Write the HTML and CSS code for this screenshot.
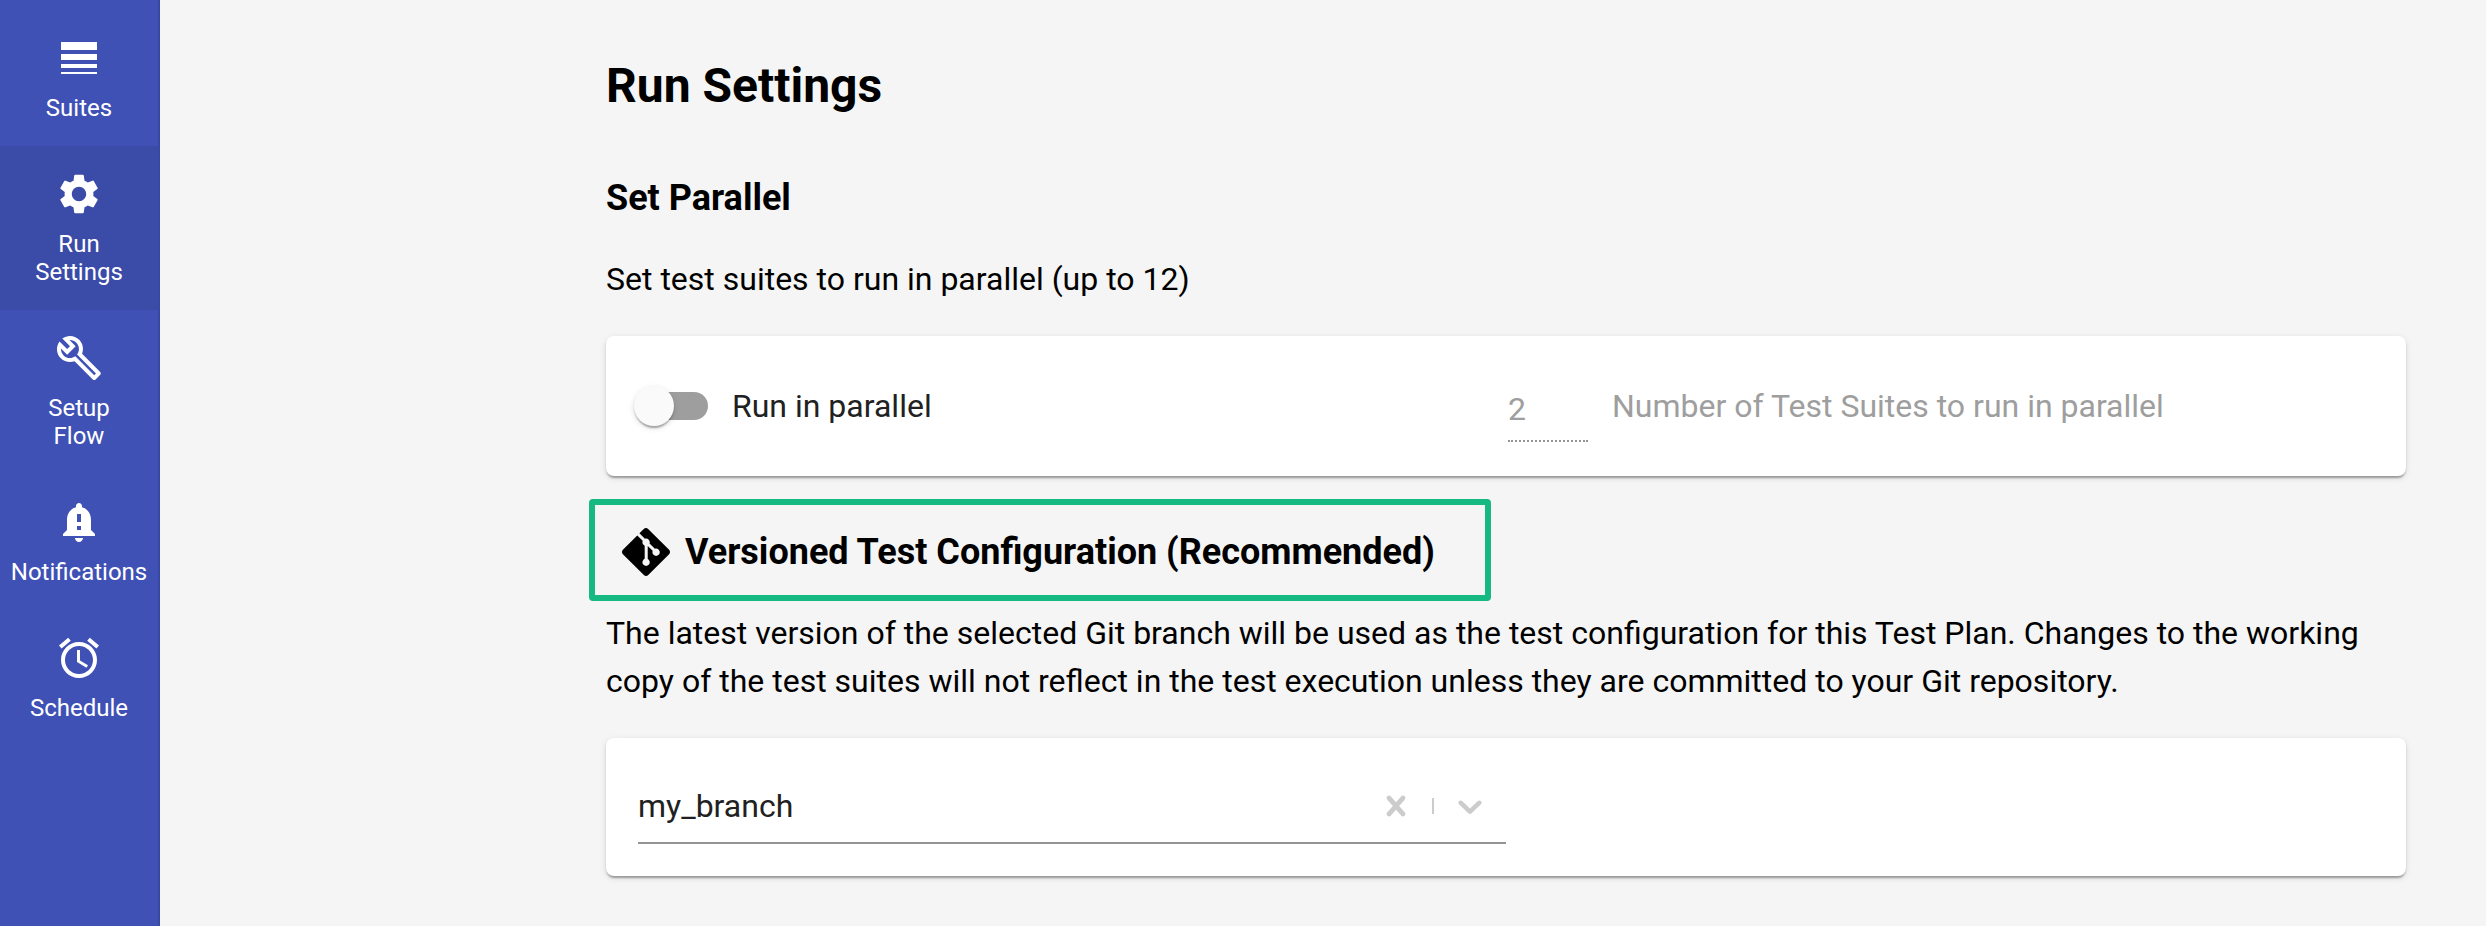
FILE: index.html
```html
<!DOCTYPE html>
<html lang="en">
<head>
<meta charset="utf-8">
<meta name="viewport" content="width=device-width, initial-scale=1">
<title>Run Settings</title>
<link rel="stylesheet" href="styles.css">
</head>
<body>
<div class="app">
  <nav class="sidebar" aria-label="Test plan">
    <a class="nav-item" href="#suites">
      <svg class="nav-icon" viewBox="0 0 24 24" aria-hidden="true"><path d="M3 17h18v-2H3v2zm0 3h18v-1H3v1zm0-7h18v-3H3v3zm0-9v4h18V4H3z"/></svg>
      <span class="nav-label">Suites</span>
    </a>
    <a class="nav-item nav-item-active" href="#run-settings" aria-current="page">
      <svg class="nav-icon" viewBox="0 0 24 24" aria-hidden="true"><path d="M19.14 12.94c.04-.3.06-.61.06-.94 0-.32-.02-.64-.07-.94l2.03-1.58c.18-.14.23-.41.12-.61l-1.92-3.32c-.12-.22-.37-.29-.59-.22l-2.39.96c-.5-.38-1.03-.7-1.62-.94l-.36-2.54c-.04-.24-.24-.41-.48-.41h-3.84c-.24 0-.43.17-.47.41l-.36 2.54c-.59.24-1.13.57-1.62.94l-2.39-.96c-.22-.08-.47 0-.59.22L2.74 8.87c-.12.21-.08.47.12.61l2.03 1.58c-.05.3-.09.63-.09.94s.02.64.07.94l-2.03 1.58c-.18.14-.23.41-.12.61l1.92 3.32c.12.22.37.29.59.22l2.39-.96c.5.38 1.03.7 1.62.94l.36 2.54c.05.24.24.41.48.41h3.84c.24 0 .44-.17.47-.41l.36-2.54c.59-.24 1.13-.56 1.62-.94l2.39.96c.22.08.47 0 .59-.22l1.92-3.32c.12-.22.07-.47-.12-.61l-2.01-1.58zM12 15.6c-1.98 0-3.6-1.62-3.6-3.6s1.62-3.6 3.6-3.6 3.6 1.62 3.6 3.6-1.62 3.6-3.6 3.6z"/></svg>
      <span class="nav-label">Run Settings</span>
    </a>
    <a class="nav-item" href="#setup-flow">
      <svg class="nav-icon" viewBox="0 0 24 24" aria-hidden="true"><path d="M22.61 18.99l-9.08-9.08c.93-2.34.45-5.1-1.44-7C9.79.61 6.21.4 3.66 2.26L7.5 6.11 6.08 7.52 2.25 3.69C.39 6.23.6 9.82 2.9 12.11c1.86 1.86 4.57 2.35 6.89 1.48l9.11 9.11c.39.39 1.02.39 1.41 0l2.3-2.3c.4-.38.4-1.01 0-1.41zm-3 1.6l-9.46-9.46c-.61.45-1.29.72-2 .82-1.36.2-2.79-.21-3.83-1.25C3.37 9.76 2.93 8.5 3 7.26l3.09 3.09 4.24-4.24-3.09-3.09c1.24-.07 2.49.37 3.44 1.31 1.08 1.08 1.49 2.57 1.24 3.96-.12.71-.42 1.37-.88 1.96l9.45 9.45-.88.89z"/></svg>
      <span class="nav-label">Setup Flow</span>
    </a>
    <a class="nav-item" href="#notifications">
      <svg class="nav-icon" viewBox="0 0 24 24" aria-hidden="true"><path d="M18 16v-5c0-3.07-1.64-5.64-4.5-6.32V4c0-.83-.67-1.5-1.5-1.5s-1.5.67-1.5 1.5v.68C7.63 5.36 6 7.92 6 11v5l-2 2v1h16v-1l-2-2zm-5 0h-2v-2h2v2zm0-4h-2V8h2v4zm-1 10c1.1 0 2-.9 2-2h-4c0 1.1.89 2 2 2z"/></svg>
      <span class="nav-label">Notifications</span>
    </a>
    <a class="nav-item" href="#schedule">
      <svg class="nav-icon" viewBox="0 0 24 24" aria-hidden="true"><path d="M22 5.72l-4.6-3.86-1.29 1.53 4.6 3.86L22 5.72zM7.88 3.39L6.6 1.86 2 5.71l1.29 1.53 4.59-3.85zM12.5 8H11v6l4.75 2.85.75-1.23-4-2.37V8zM12 4c-4.97 0-9 4.03-9 9s4.02 9 9 9c4.97 0 9-4.03 9-9s-4.03-9-9-9zm0 16c-3.87 0-7-3.13-7-7s3.13-7 7-7 7 3.13 7 7-3.13 7-7 7z"/></svg>
      <span class="nav-label">Schedule</span>
    </a>
  </nav>

  <main class="content">
    <h1 class="page-title">Run Settings</h1>

    <section>
      <h2 class="section-title">Set Parallel</h2>
      <p class="lead">Set test suites to run in parallel (up to 12)</p>
      <div class="card columns">
        <label class="field">
          <input class="switch" type="checkbox" role="switch">
          <span>Run in parallel</span>
        </label>
        <label class="field field-disabled">
          <input class="count" type="text" inputmode="numeric" value="2" disabled>
          <span>Number of Test Suites to run in parallel</span>
        </label>
      </div>
    </section>

    <section>
      <h2 class="section-title highlighted">
        <svg class="git-icon" viewBox="0 0 24 24" aria-hidden="true"><path d="M23.546 10.93L13.067.452c-.604-.603-1.582-.603-2.188 0L8.708 2.627l2.76 2.76c.645-.215 1.379-.07 1.889.441.516.515.658 1.258.438 1.9l2.658 2.66c.645-.223 1.387-.078 1.9.435.721.72.721 1.884 0 2.604-.719.719-1.881.719-2.6 0-.539-.541-.674-1.337-.404-1.996L12.86 8.955v6.525c.176.086.342.203.488.348.713.721.713 1.883 0 2.6-.719.721-1.889.721-2.609 0-.719-.719-.719-1.879 0-2.598.182-.18.387-.316.605-.406V8.835c-.217-.091-.424-.222-.6-.401-.545-.545-.676-1.342-.396-2.009L7.636 3.7.45 10.881c-.6.605-.6 1.584 0 2.189l10.48 10.477c.604.604 1.582.604 2.186 0l10.43-10.43c.605-.603.605-1.582 0-2.187"/></svg>
        <span>Versioned Test Configuration (Recommended)</span>
      </h2>
      <p class="lead">The latest version of the selected Git branch will be used as the test configuration for this Test Plan. Changes to the working copy of the test suites will not reflect in the test execution unless they are committed to your Git repository.</p>
      <div class="card">
        <div class="branch">
          <select class="branch-select" aria-label="Git branch">
            <option>my_branch</option>
          </select>
          <button class="branch-clear" type="button" aria-label="Clear branch">
            <svg class="branch-icon" viewBox="0 0 20 20" aria-hidden="true"><path d="M14.348 14.849c-0.469 0.469-1.229 0.469-1.697 0l-2.651-3.030-2.651 3.029c-0.469 0.469-1.229 0.469-1.697 0-0.469-0.469-0.469-1.229 0-1.697l2.758-3.15-2.759-3.152c-0.469-0.469-0.469-1.228 0-1.697s1.228-0.469 1.697 0l2.652 3.031 2.651-3.031c0.469-0.469 1.228-0.469 1.697 0s0.469 1.229 0 1.697l-2.758 3.152 2.758 3.15c0.469 0.469 0.469 1.229 0 1.698z"/></svg>
          </button>
          <span class="branch-separator"></span>
          <span class="branch-arrow">
            <svg class="branch-icon" viewBox="0 0 20 20" aria-hidden="true"><path d="M4.516 7.548c0.436-0.446 1.043-0.481 1.576 0l3.908 3.747 3.908-3.747c0.533-0.481 1.141-0.446 1.574 0 0.436 0.445 0.408 1.197 0 1.615-0.406 0.418-4.695 4.502-4.695 4.502-0.217 0.223-0.502 0.335-0.787 0.335s-0.57-0.112-0.789-0.335c0 0-4.287-4.084-4.695-4.502s-0.436-1.17 0-1.615z"/></svg>
          </span>
        </div>
      </div>
    </section>
  </main>
</div>
</body>
</html>
```

FILE: styles.css
```css
* {
  box-sizing: border-box;
}

body {
  margin: 0;
  background: #f5f5f5;
  color: #000;
  font-family: Roboto, "Liberation Sans", sans-serif;
  font-size: 32px;
  line-height: 48px;
}

.app {
  display: flex;
  min-height: 100vh;
}

.sidebar {
  flex: 0 0 160px;
  padding-top: 10px;
  border-right: 2px solid #3949a3;
  background: #3f51b5;
}

.nav-item {
  display: flex;
  flex-direction: column;
  align-items: center;
  gap: 12px;
  padding: 24px 10px;
  color: #fff;
  font-size: 24px;
  line-height: 28px;
  text-align: center;
  text-decoration: none;
}

.nav-item-active {
  background: #3a4ba8;
}

.nav-label {
  width: min-content;
}

.nav-icon {
  width: 48px;
  height: 48px;
  fill: currentColor;
}

.content {
  flex: 1;
  min-width: 0;
  padding: 58px 80px 48px 446px;
}

.page-title {
  margin: 0 0 60px;
  font-size: 48px;
  line-height: 56px;
  font-weight: 700;
}

.section-title {
  margin: 0 0 33px;
  font-size: 36px;
  line-height: 48px;
  font-weight: 700;
}

.highlighted {
  display: flex;
  align-items: center;
  gap: 15px;
  width: fit-content;
  margin: 23px 0 8px -17px;
  padding: 23px 50px 19px 27px;
  border: 6px solid #16b981;
  border-radius: 4px;
}

.git-icon {
  flex: none;
  width: 48px;
  height: 48px;
}

.lead {
  margin: 0 0 33px;
}

.card {
  padding: 32px;
  border-radius: 8px;
  background: #fff;
  color: #212121;
  box-shadow: 0 4px 2px -2px rgba(0, 0, 0, 0.2), 0 2px 2px rgba(0, 0, 0, 0.14), 0 2px 6px rgba(0, 0, 0, 0.12);
}

.columns {
  display: grid;
  grid-template-columns: 1fr 1fr;
  gap: 4px;
}

.field {
  display: flex;
  align-items: center;
  gap: 24px;
  min-height: 76px;
}

.field-disabled {
  color: #9e9e9e;
}

.switch {
  position: relative;
  width: 68px;
  height: 28px;
  margin: 0 0 0 2px;
  appearance: none;
  border-radius: 14px;
  background: #9e9e9e;
}

.switch::before {
  content: "";
  position: absolute;
  top: -6px;
  left: -6px;
  width: 40px;
  height: 40px;
  border-radius: 50%;
  background: #fafafa;
  box-shadow: 0 4px 2px -2px rgba(0, 0, 0, 0.2), 0 2px 2px rgba(0, 0, 0, 0.14), 0 2px 6px rgba(0, 0, 0, 0.12);
}

.switch:checked {
  background: #9fa8da;
}

.switch:checked::before {
  left: 34px;
  background: #3f51b5;
}

.count {
  width: 80px;
  height: 72px;
  padding: 8px 0 0;
  border: 0;
  border-bottom: 2px dotted #949494;
  background: none;
  color: inherit;
  font: inherit;
}

.branch {
  display: flex;
  align-items: center;
  width: 50%;
  border-bottom: 2px solid #949494;
}

.branch-select {
  flex: 1;
  min-width: 0;
  height: 72px;
  padding: 0;
  border: 0;
  appearance: none;
  background: none;
  color: inherit;
  font: inherit;
}

.branch-clear,
.branch-arrow {
  display: flex;
  padding: 16px;
  border: 0;
  background: none;
  color: #ccc;
}

.branch-icon {
  width: 40px;
  height: 40px;
  fill: currentColor;
}

.branch-separator {
  width: 2px;
  height: 16px;
  background: #ccc;
}
```
